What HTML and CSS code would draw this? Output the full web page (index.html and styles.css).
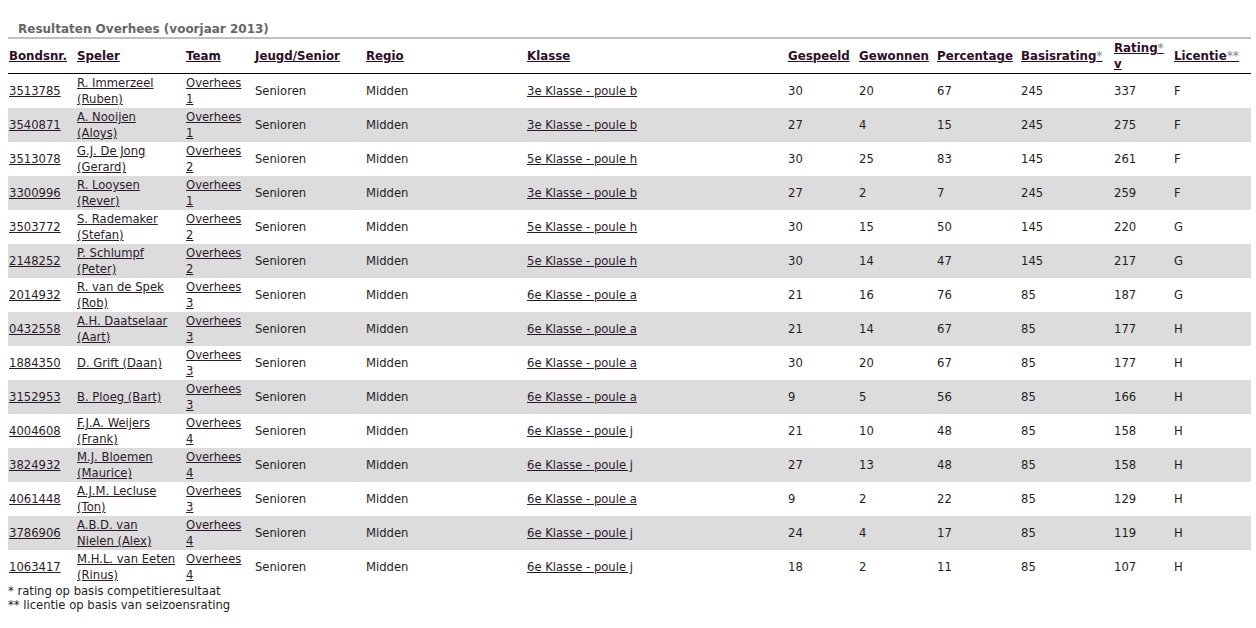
FILE: index.html
```html
<!DOCTYPE html>
<html lang="nl">
<head>
<meta charset="utf-8">
<title>Resultaten Overhees (voorjaar 2013)</title>
<link rel="stylesheet" href="styles.css">
</head>
<body>
<div class="page">
  <h2 class="title">Resultaten Overhees (voorjaar 2013)</h2>
  <table class="results">
    <colgroup>
      <col class="c-bond"><col class="c-speler"><col class="c-team"><col class="c-jeugd"><col class="c-regio"><col class="c-klasse"><col class="c-gesp"><col class="c-gew"><col class="c-perc"><col class="c-basis"><col class="c-rating"><col class="c-lic">
    </colgroup>
    <thead>
      <tr>
        <th><a href="#">Bondsnr.</a></th>
        <th><a href="#">Speler</a></th>
        <th><a href="#">Team</a></th>
        <th><a href="#">Jeugd/Senior</a></th>
        <th><a href="#">Regio</a></th>
        <th><a href="#">Klasse</a></th>
        <th><a href="#">Gespeeld</a></th>
        <th><a href="#">Gewonnen</a></th>
        <th><a href="#">Percentage</a></th>
        <th><a href="#">Basisrating<span class="ast">*</span></a></th>
        <th><a href="#">Rating<span class="ast">*</span> v</a></th>
        <th><a href="#">Licentie<span class="ast">**</span></a></th>
      </tr>
    </thead>
    <tbody>
      <tr><td><a href="#">3513785</a></td><td><a href="#">R. Immerzeel (Ruben)</a></td><td><a href="#">Overhees 1</a></td><td>Senioren</td><td>Midden</td><td><a href="#">3e Klasse - poule b</a></td><td>30</td><td>20</td><td>67</td><td>245</td><td>337</td><td>F</td></tr>
      <tr><td><a href="#">3540871</a></td><td><a href="#">A. Nooijen (Aloys)</a></td><td><a href="#">Overhees 1</a></td><td>Senioren</td><td>Midden</td><td><a href="#">3e Klasse - poule b</a></td><td>27</td><td>4</td><td>15</td><td>245</td><td>275</td><td>F</td></tr>
      <tr><td><a href="#">3513078</a></td><td><a href="#">G.J. De Jong (Gerard)</a></td><td><a href="#">Overhees 2</a></td><td>Senioren</td><td>Midden</td><td><a href="#">5e Klasse - poule h</a></td><td>30</td><td>25</td><td>83</td><td>145</td><td>261</td><td>F</td></tr>
      <tr><td><a href="#">3300996</a></td><td><a href="#">R. Looysen (Rever)</a></td><td><a href="#">Overhees 1</a></td><td>Senioren</td><td>Midden</td><td><a href="#">3e Klasse - poule b</a></td><td>27</td><td>2</td><td>7</td><td>245</td><td>259</td><td>F</td></tr>
      <tr><td><a href="#">3503772</a></td><td><a href="#">S. Rademaker (Stefan)</a></td><td><a href="#">Overhees 2</a></td><td>Senioren</td><td>Midden</td><td><a href="#">5e Klasse - poule h</a></td><td>30</td><td>15</td><td>50</td><td>145</td><td>220</td><td>G</td></tr>
      <tr><td><a href="#">2148252</a></td><td><a href="#">P. Schlumpf (Peter)</a></td><td><a href="#">Overhees 2</a></td><td>Senioren</td><td>Midden</td><td><a href="#">5e Klasse - poule h</a></td><td>30</td><td>14</td><td>47</td><td>145</td><td>217</td><td>G</td></tr>
      <tr><td><a href="#">2014932</a></td><td><a href="#">R. van de Spek (Rob)</a></td><td><a href="#">Overhees 3</a></td><td>Senioren</td><td>Midden</td><td><a href="#">6e Klasse - poule a</a></td><td>21</td><td>16</td><td>76</td><td>85</td><td>187</td><td>G</td></tr>
      <tr><td><a href="#">0432558</a></td><td><a href="#">A.H. Daatselaar (Aart)</a></td><td><a href="#">Overhees 3</a></td><td>Senioren</td><td>Midden</td><td><a href="#">6e Klasse - poule a</a></td><td>21</td><td>14</td><td>67</td><td>85</td><td>177</td><td>H</td></tr>
      <tr><td><a href="#">1884350</a></td><td><a href="#">D. Grift (Daan)</a></td><td><a href="#">Overhees 3</a></td><td>Senioren</td><td>Midden</td><td><a href="#">6e Klasse - poule a</a></td><td>30</td><td>20</td><td>67</td><td>85</td><td>177</td><td>H</td></tr>
      <tr><td><a href="#">3152953</a></td><td><a href="#">B. Ploeg (Bart)</a></td><td><a href="#">Overhees 3</a></td><td>Senioren</td><td>Midden</td><td><a href="#">6e Klasse - poule a</a></td><td>9</td><td>5</td><td>56</td><td>85</td><td>166</td><td>H</td></tr>
      <tr><td><a href="#">4004608</a></td><td><a href="#">F.J.A. Weijers (Frank)</a></td><td><a href="#">Overhees 4</a></td><td>Senioren</td><td>Midden</td><td><a href="#">6e Klasse - poule j</a></td><td>21</td><td>10</td><td>48</td><td>85</td><td>158</td><td>H</td></tr>
      <tr><td><a href="#">3824932</a></td><td><a href="#">M.J. Bloemen (Maurice)</a></td><td><a href="#">Overhees 4</a></td><td>Senioren</td><td>Midden</td><td><a href="#">6e Klasse - poule j</a></td><td>27</td><td>13</td><td>48</td><td>85</td><td>158</td><td>H</td></tr>
      <tr><td><a href="#">4061448</a></td><td><a href="#">A.J.M. Lecluse (Ton)</a></td><td><a href="#">Overhees 3</a></td><td>Senioren</td><td>Midden</td><td><a href="#">6e Klasse - poule a</a></td><td>9</td><td>2</td><td>22</td><td>85</td><td>129</td><td>H</td></tr>
      <tr><td><a href="#">3786906</a></td><td><a href="#">A.B.D. van Nielen (Alex)</a></td><td><a href="#">Overhees 4</a></td><td>Senioren</td><td>Midden</td><td><a href="#">6e Klasse - poule j</a></td><td>24</td><td>4</td><td>17</td><td>85</td><td>119</td><td>H</td></tr>
      <tr><td><a href="#">1063417</a></td><td><a href="#">M.H.L. van Eeten (Rinus)</a></td><td><a href="#">Overhees 4</a></td><td>Senioren</td><td>Midden</td><td><a href="#">6e Klasse - poule j</a></td><td>18</td><td>2</td><td>11</td><td>85</td><td>107</td><td>H</td></tr>
    </tbody>
  </table>
  <div class="notes">
    <p>* rating op basis competitieresultaat</p>
    <p>** licentie op basis van seizoensrating</p>
  </div>
</div>
</body>
</html>
```

FILE: styles.css
```css
html, body {
  margin: 0;
  padding: 0;
  background: #fff;
}

body {
  font-family: "DejaVu Sans", Verdana, sans-serif;
  font-size: 11.6px;
  color: #1e1e1e;
}

.page {
  margin: 0 5px 0 8px;
  padding-top: 21px;
}

.title {
  margin: 0;
  padding: 0 0 0 10px;
  font-size: 12px;
  line-height: 16px;
  font-weight: bold;
  color: #666;
  border-bottom: 2px solid #c0c0c0;
}

.results {
  width: 100%;
  table-layout: fixed;
  border-collapse: separate;
  border-spacing: 0;
}

.c-bond { width: 68px; }
.c-speler { width: 109px; }
.c-team { width: 69px; }
.c-jeugd { width: 111px; }
.c-regio { width: 161px; }
.c-klasse { width: 261px; }
.c-gesp { width: 71px; }
.c-gew { width: 78px; }
.c-perc { width: 84px; }
.c-basis { width: 93px; }
.c-rating { width: 60px; }
.c-lic { width: auto; }

.results th {
  height: 34px;
  padding: 0 6px 0 1px;
  text-align: left;
  vertical-align: middle;
  font-size: 11.8px;
  font-weight: bold;
  line-height: 16px;
  border-bottom: 1px solid #000;
}

.results th a {
  color: #2a0f26;
  text-decoration: underline;
}

.results th .ast {
  color: #9a9a9a;
}

.results td {
  height: 34px;
  padding: 0 8px 0 1px;
  vertical-align: middle;
  line-height: 16px;
}

.results tbody tr:nth-child(even) td {
  background: #dcdcdc;
}

.results td a {
  color: #2b1a2b;
  text-decoration: underline;
}

.notes p {
  margin: 0;
  line-height: 14px;
}
```
